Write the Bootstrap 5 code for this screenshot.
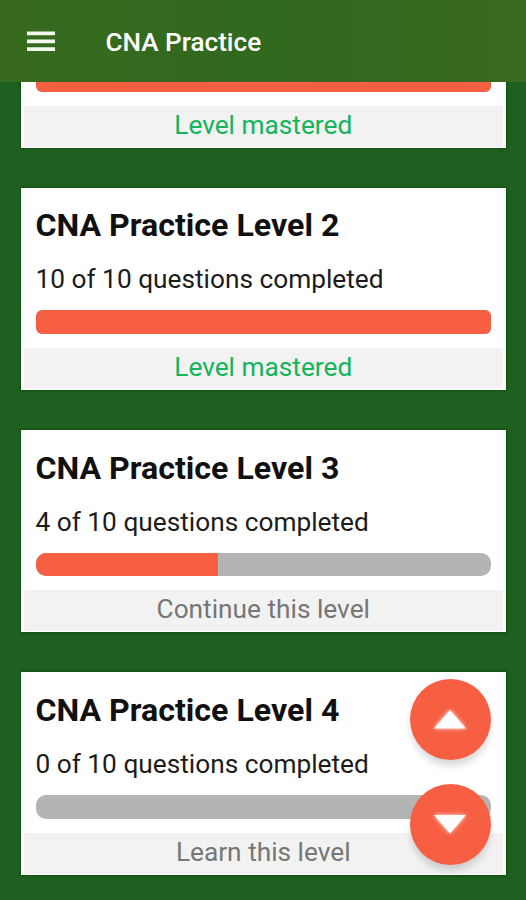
<!DOCTYPE html>
<html lang="en">
<head>
<meta charset="utf-8">
<meta name="viewport" content="width=device-width, initial-scale=1">
<title>CNA Practice</title>
<link href="https://cdn.jsdelivr.net/npm/bootstrap@5.3.0/dist/css/bootstrap.min.css" rel="stylesheet">
<style>
  body { font-family: Roboto, "Liberation Sans", sans-serif; background: #1e6020; }
  .app-bar { height: 81.5px; padding: 2px 27px 0; background: linear-gradient(90deg, #376a1e, #31691f 50%, #386a1f); }
  .menu-btn { width: 28px; height: 21px; }
  .app-title { margin-left: 50.5px; padding-top: 1px; font-size: 26.1px; line-height: 32px; font-weight: 500; }
  .level-list { gap: 40px; padding: 0 20px 25.2px 20.5px; }
  .level-card { height: 202.4px; box-shadow: 0 0 2px 1px rgba(0, 70, 0, .55); }
  .level-card.is-scrolled { height: auto; }
  .level-body { padding: 18.7px 15px 14px; }
  .level-name { font-size: 32.15px; line-height: 38px; margin-bottom: 19px; color: #111; }
  .level-count { font-size: 26.25px; line-height: 32px; margin-bottom: 15px; color: #1c1c1c; }
  .level-progress { height: 23.5px; border-radius: 10px; background: #b4b4b4; }
  .level-progress .progress-bar { background: #f75f43; border-radius: 6px 0 0 6px; }
  .level-progress.is-full { border-radius: 6px; }
  .level-action { margin: 0 3px 1px; height: 41px; font-size: 26.25px; line-height: 39.6px; color: #767676; background: #f2f2f2; }
  .level-action.is-mastered { color: #12b45c; }
  .scroll-buttons { right: 35px; bottom: 35px; gap: 23.5px; }
  .scroll-btn { width: 81.5px; height: 81.5px; background: #f75f43; box-shadow: 0 7px 9px -2px rgba(0, 0, 0, .18); }
  .arrow-icon { filter: drop-shadow(0 0 2px rgba(255, 255, 255, .9)); }
</style>
<script src="https://cdn.jsdelivr.net/npm/bootstrap@5.3.0/dist/js/bootstrap.bundle.min.js"></script>
</head>
<body>
<div class="vh-100 d-flex flex-column overflow-hidden position-relative">
  <header class="app-bar d-flex align-items-center flex-shrink-0 text-white">
    <button class="menu-btn btn p-0 border-0 d-flex" aria-label="Menu">
      <svg width="28" height="21" viewBox="0 0 28 21" fill="#f4f8ee"><path d="M0 .5h28v3.8H0zM0 8.4h28v3.8H0zM0 16.3h28v3.8H0z"/></svg>
    </button>
    <h1 class="app-title mb-0">CNA Practice</h1>
  </header>
  <main class="flex-fill overflow-hidden d-flex flex-column justify-content-end">
    <div class="level-list d-flex flex-column flex-shrink-0">
      <section class="level-card is-scrolled card border-0 rounded-0 flex-shrink-0">
        <div class="level-body">
          <div class="level-progress is-full progress"><div class="progress-bar" style="width:100%"></div></div>
        </div>
        <div class="level-action is-mastered text-center">Level mastered</div>
      </section>
      <section class="level-card card border-0 rounded-0 flex-shrink-0">
        <div class="level-body">
          <h2 class="level-name fw-bold">CNA Practice Level 2</h2>
          <p class="level-count">10 of 10 questions completed</p>
          <div class="level-progress is-full progress"><div class="progress-bar" style="width:100%"></div></div>
        </div>
        <div class="level-action is-mastered text-center">Level mastered</div>
      </section>
      <section class="level-card card border-0 rounded-0 flex-shrink-0">
        <div class="level-body">
          <h2 class="level-name fw-bold">CNA Practice Level 3</h2>
          <p class="level-count">4 of 10 questions completed</p>
          <div class="level-progress progress"><div class="progress-bar" style="width:40%"></div></div>
        </div>
        <div class="level-action text-center">Continue this level</div>
      </section>
      <section class="level-card card border-0 rounded-0 flex-shrink-0">
        <div class="level-body">
          <h2 class="level-name fw-bold">CNA Practice Level 4</h2>
          <p class="level-count">0 of 10 questions completed</p>
          <div class="level-progress progress"><div class="progress-bar" style="width:0%"></div></div>
        </div>
        <div class="level-action text-center">Learn this level</div>
      </section>
    </div>
  </main>
  <div class="scroll-buttons position-absolute d-flex flex-column">
    <button class="scroll-btn btn rounded-circle border-0 p-0 d-flex align-items-center justify-content-center" aria-label="Scroll up">
      <svg class="arrow-icon" width="40" height="30" viewBox="0 0 40 30" fill="#fff"><path d="M20 6 36 24.5H4z"/></svg>
    </button>
    <button class="scroll-btn btn rounded-circle border-0 p-0 d-flex align-items-center justify-content-center" aria-label="Scroll down">
      <svg class="arrow-icon" width="40" height="30" viewBox="0 0 40 30" fill="#fff"><path d="M20 24.5 4 6h32z"/></svg>
    </button>
  </div>
</div>
</body>
</html>
